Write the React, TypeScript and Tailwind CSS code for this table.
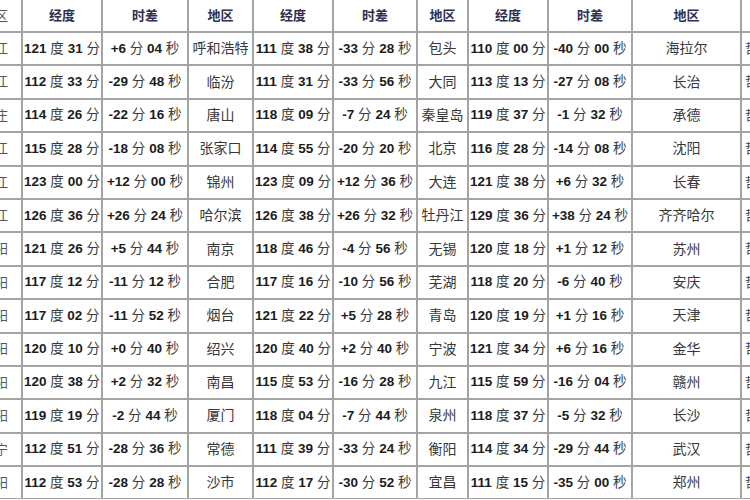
import React from "react";

type Row = [string, string, string];

const setA: Row[] = [
  ["121 度 31 分", "+6 分 04 秒", "呼和浩特"],
  ["112 度 33 分", "-29 分 48 秒", "临汾"],
  ["114 度 26 分", "-22 分 16 秒", "唐山"],
  ["115 度 28 分", "-18 分 08 秒", "张家口"],
  ["123 度 00 分", "+12 分 00 秒", "锦州"],
  ["126 度 36 分", "+26 分 24 秒", "哈尔滨"],
  ["121 度 26 分", "+5 分 44 秒", "南京"],
  ["117 度 12 分", "-11 分 12 秒", "合肥"],
  ["117 度 02 分", "-11 分 52 秒", "烟台"],
  ["120 度 10 分", "+0 分 40 秒", "绍兴"],
  ["120 度 38 分", "+2 分 32 秒", "南昌"],
  ["119 度 19 分", "-2 分 44 秒", "厦门"],
  ["112 度 51 分", "-28 分 36 秒", "常德"],
  ["112 度 53 分", "-28 分 28 秒", "沙市"],
];

const setB: Row[] = [
  ["111 度 38 分", "-33 分 28 秒", "包头"],
  ["111 度 31 分", "-33 分 56 秒", "大同"],
  ["118 度 09 分", "-7 分 24 秒", "秦皇岛"],
  ["114 度 55 分", "-20 分 20 秒", "北京"],
  ["123 度 09 分", "+12 分 36 秒", "大连"],
  ["126 度 38 分", "+26 分 32 秒", "牡丹江"],
  ["118 度 46 分", "-4 分 56 秒", "无锡"],
  ["117 度 16 分", "-10 分 56 秒", "芜湖"],
  ["121 度 22 分", "+5 分 28 秒", "青岛"],
  ["120 度 40 分", "+2 分 40 秒", "宁波"],
  ["115 度 53 分", "-16 分 28 秒", "九江"],
  ["118 度 04 分", "-7 分 44 秒", "泉州"],
  ["111 度 39 分", "-33 分 24 秒", "衡阳"],
  ["112 度 17 分", "-30 分 52 秒", "宜昌"],
];

const setC: Row[] = [
  ["110 度 00 分", "-40 分 00 秒", "海拉尔"],
  ["113 度 13 分", "-27 分 08 秒", "长治"],
  ["119 度 37 分", "-1 分 32 秒", "承德"],
  ["116 度 28 分", "-14 分 08 秒", "沈阳"],
  ["121 度 38 分", "+6 分 32 秒", "长春"],
  ["129 度 36 分", "+38 分 24 秒", "齐齐哈尔"],
  ["120 度 18 分", "+1 分 12 秒", "苏州"],
  ["118 度 20 分", "-6 分 40 秒", "安庆"],
  ["120 度 19 分", "+1 分 16 秒", "天津"],
  ["121 度 34 分", "+6 分 16 秒", "金华"],
  ["115 度 59 分", "-16 分 04 秒", "赣州"],
  ["118 度 37 分", "-5 分 32 秒", "长沙"],
  ["114 度 34 分", "-29 分 44 秒", "武汉"],
  ["111 度 15 分", "-35 分 00 秒", "郑州"],
];

const leftEdge = ["区", "江", "江", "庄", "江", "江", "江", "阳", "阳", "阳", "阳", "阳", "阳", "宁", "阳"];
const rightEdge = ["", "哲", "哲", "哲", "哲", "哲", "哲", "哲", "哲", "哲", "哲", "哲", "哲", "哲", "哲"];

const font = { fontFamily: '"Liberation Sans", "Noto Sans CJK SC", sans-serif' };

function Value({ text }: { text: string }) {
  const parts = text.split(" ");
  return (
    <span className="whitespace-nowrap">
      {parts.map((p, i) => {
        const isNum = /^[+\-0-9]/.test(p);
        return (
          <React.Fragment key={i}>
            {i > 0 ? " " : null}
            {isNum ? (
              <span className="font-bold text-[#1c1c1c]">{p}</span>
            ) : (
              <span className="font-normal text-[#3a3a3a]">{p}</span>
            )}
          </React.Fragment>
        );
      })}
    </span>
  );
}

function Header({ label }: { label: string }) {
  return (
    <div className="bg-white flex items-center justify-center text-[13px] font-bold text-[#2f2f4f]">
      {label}
    </div>
  );
}

function Cell({ text }: { text: string }) {
  return (
    <div className="bg-white flex items-center justify-center text-[13.5px] overflow-hidden">
      <Value text={text} />
    </div>
  );
}

function Region({ text }: { text: string }) {
  return (
    <div className="bg-white flex items-center justify-center text-[14px] text-[#383838] overflow-hidden whitespace-nowrap">
      {text}
    </div>
  );
}

export default function App() {
  const cells: React.ReactNode[] = [];
  cells.push(
    <div key="h-l" className="bg-white flex items-center justify-start overflow-hidden text-[13px] text-[#555]">
      <span className="ml-[-5px]">{leftEdge[0]}</span>
    </div>
  );
  for (const [i] of [setA, setB, setC].entries()) {
    cells.push(<Header key={`h1-${i}`} label="经度" />);
    cells.push(<Header key={`h2-${i}`} label="时差" />);
    cells.push(<Header key={`h3-${i}`} label="地区" />);
  }
  cells.push(<div key="h-r" className="bg-white" />);

  for (let r = 0; r < 14; r++) {
    cells.push(
      <div key={`l-${r}`} className="bg-white flex items-center justify-start overflow-hidden text-[13px] text-[#555]">
        <span className="ml-[-5px]">{leftEdge[r + 1]}</span>
      </div>
    );
    for (const [i, set] of [setA, setB, setC].entries()) {
      const row = set[r];
      cells.push(<Cell key={`a-${r}-${i}`} text={row[0]} />);
      cells.push(<Cell key={`b-${r}-${i}`} text={row[1]} />);
      cells.push(<Region key={`c-${r}-${i}`} text={row[2]} />);
    }
    cells.push(
      <div key={`r-${r}`} className="bg-white flex items-center justify-start overflow-hidden text-[13px] text-[#444]">
        <span className="ml-[3px]">{rightEdge[r + 1]}</span>
      </div>
    );
  }

  return (
    <div className="w-[750px] h-[500px] overflow-hidden bg-white" style={font}>
      <div className="grid bg-[#a4a4a4] gap-[2px] grid-cols-[21px_78px_84px_63px_78px_82px_49px_78px_82px_107px_8px] grid-rows-[31px_repeat(14,31.4px)] pb-[1px]">
        {cells}
      </div>
    </div>
  );
}
